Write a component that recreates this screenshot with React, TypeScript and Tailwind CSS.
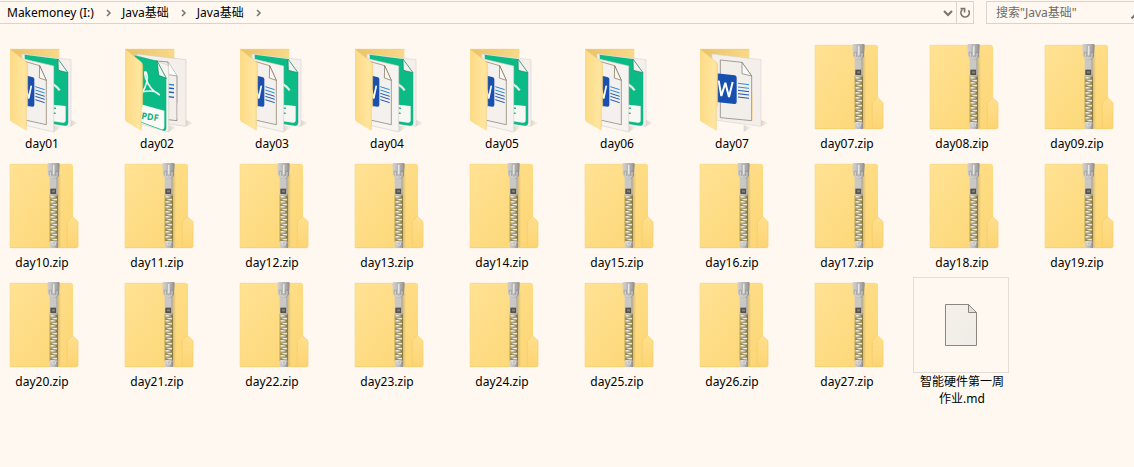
import type { ReactNode } from "react";

type Kind = "word-pdf" | "pdf-word" | "word" | "zip" | "file";
type Entry = { name: string; kind: Kind };

const folders: Entry[] = [
  { name: "day01", kind: "word-pdf" },
  { name: "day02", kind: "pdf-word" },
  { name: "day03", kind: "word-pdf" },
  { name: "day04", kind: "word-pdf" },
  { name: "day05", kind: "word-pdf" },
  { name: "day06", kind: "word-pdf" },
  { name: "day07", kind: "word" },
];

const archives: Entry[] = Array.from({ length: 21 }, (_, i) => ({
  name: `day${String(i + 7).padStart(2, "0")}.zip`,
  kind: "zip",
}));

const entries: Entry[] = [...folders, ...archives, { name: "智能硬件第一周作业.md", kind: "file" }];

function SharedPaint() {
  return (
    <svg className="absolute size-0" aria-hidden="true">
      <defs>
        <linearGradient id="folder" x1="0" y1="0" x2="1" y2="1">
          <stop offset="0" stopColor="#ffe294" />
          <stop offset="1" stopColor="#fdd674" />
        </linearGradient>
        <linearGradient id="back" x1="0" y1="0" x2="1" y2="0">
          <stop offset="0" stopColor="#e9c267" />
          <stop offset="1" stopColor="#f9d988" />
        </linearGradient>
        <linearGradient id="flap" x1="0" y1="0" x2="1" y2="0">
          <stop offset="0" stopColor="#fddb85" />
          <stop offset="0.8" stopColor="#ffe59f" />
          <stop offset="1" stopColor="#fbdc8c" />
        </linearGradient>
        <linearGradient id="tab" x1="0" y1="0" x2="0" y2="1">
          <stop offset="0" stopColor="#ffdf8c" />
          <stop offset="1" stopColor="#fdd473" />
        </linearGradient>
        <linearGradient id="metal" x1="0" y1="0" x2="1" y2="0">
          <stop offset="0" stopColor="#d2d1cf" />
          <stop offset="0.6" stopColor="#b9b8b6" />
          <stop offset="1" stopColor="#8c8a88" />
        </linearGradient>
        <linearGradient id="shade" x1="0" y1="0" x2="1" y2="0">
          <stop offset="0" stopColor="#8d8372" stopOpacity="0.35" />
          <stop offset="1" stopColor="#8d8372" stopOpacity="0" />
        </linearGradient>
        <linearGradient id="floor" x1="0" y1="0" x2="1" y2="0">
          <stop offset="0" stopColor="#8d8372" stopOpacity="0.3" />
          <stop offset="1" stopColor="#8d8372" stopOpacity="0" />
        </linearGradient>
        <linearGradient id="paper" x1="0" y1="0" x2="1" y2="1">
          <stop offset="0" stopColor="#f5f1ea" />
          <stop offset="1" stopColor="#efebe6" />
        </linearGradient>
        <pattern id="teeth" x="149" y="126" width="25" height="15" patternUnits="userSpaceOnUse">
          <rect width="25" height="15" fill="#8c7c3c" />
          <rect x="0" width="3" height="15" fill="#b99f4d" />
          <path d="M3 0h10v5H3zM11 8h11v5H11z" fill="#eeebe2" />
          <path d="M3 5h8v3H3zM13 13h9v2h-9z" fill="#b5b1a3" />
          <path d="M13 1h5v4h-5zM6 9h5v4H6z" fill="#c8c3b4" />
        </pattern>
      </defs>
    </svg>
  );
}

function FolderShell({ children }: { children: ReactNode }) {
  return (
    <svg viewBox="-21 -3 288 288" className="size-full" aria-hidden="true">
      <path d="M213 240L236 249L213 259Z" fill="url(#floor)" />
      <path d="M161 256L186 262L161 276Z" fill="url(#floor)" />
      <path d="M30 27H178V235H30Z" fill="url(#back)" />
      {children}
      <path d="M30 27L76 64Q83 69 83 76V197L79 205V272L34 245Q30 243 30 238Z" fill="url(#flap)" />
      <path d="M30 27L76 64Q83 69 83 76V197L79 205V270" fill="none" stroke="#efca70" strokeWidth="1.5" />
      <path d="M30 28H178" stroke="#f3cf7a" strokeWidth="2" />
    </svg>
  );
}

function WordPdfFolder() {
  return (
    <FolderShell>
      <path d="M66 42L213 59V259L162 252L66 235Z" fill="#f4efeb" stroke="#ddd7d2" strokeWidth="2" />
      <path d="M74 44L174 57L204 98V249Q204 258 195 257L80 240Z" fill="#0bba84" />
      <path d="M205 98V250" stroke="#6b8fc0" strokeWidth="1" />
      <path d="M174 57L204 98L175 91Z" fill="#f3f1ef" stroke="#13875f" strokeWidth="2" />
      <path d="M158 132Q170 139 179 151" fill="none" stroke="#dcefe7" strokeWidth="7" />
      <path d="M159 194L197 198V240Q197 249 188 248L159 244Z" fill="#f9f7f3" />
      <path d="M160 204L168 205M160 219L167 220" stroke="#15ae7b" strokeWidth="4" fill="none" />
      <path d="M62 55L161 78V276L80 257Z" fill="#f7f3f0" stroke="#d8d2cc" strokeWidth="2" />
      <path d="M70 63L119 77L139 121V254L80 241" fill="#f4f0ed" stroke="#827358" strokeWidth="2" />
      <path d="M119 77L118 114L139 121Z" fill="#f9f7f4" stroke="#75684f" strokeWidth="2" />
      <path d="M75 106L99 112Q103 113 103 118V195Q103 200 98 200L75 197Z" fill="#194fae" />
      <path d="M80 150L86 176L94 137" fill="none" stroke="#fff" strokeWidth="5" />
      <path d="M106 140L134 149M106 150L134 159" stroke="#2388d8" strokeWidth="3" />
      <path d="M106 160L134 169M106 169L134 178M106 179L134 188" stroke="#1d58b5" strokeWidth="3" />
    </FolderShell>
  );
}

function PdfWordFolder() {
  return (
    <FolderShell>
      <path d="M66 42L213 59V259L162 252L66 235Z" fill="#f4efeb" stroke="#d3ccc6" strokeWidth="2" />
      <path d="M90 60L159 66L186 108V242L150 238Z" fill="#f2eeea" stroke="#716b63" strokeWidth="2" />
      <path d="M159 66L161 104L186 108" fill="#fff" stroke="#8b8479" strokeWidth="2" />
      <path d="M188 190V236" stroke="#f9dcaf" strokeWidth="3" />
      <path d="M159 133L177 135" stroke="#2685d5" strokeWidth="4" />
      <path d="M159 144L177 146M159 156L177 158M159 170L177 172" stroke="#1c56b4" strokeWidth="4" />
      <path d="M58 44L156 74L161 80V276L66 249Z" fill="#f7f4ef" stroke="#d7d0c8" strokeWidth="2" />
      <path d="M58 46L126 62L154 115V263Q154 274 145 272L76 247Z" fill="#0bba84" />
      <path d="M126 62L131 106L154 115Z" fill="#e7f6ef" stroke="#127e5a" strokeWidth="2" />
      <path d="M80 161Q104 122 94 98Q86 89 92 115Q104 150 133 164Q119 147 80 156" fill="none" stroke="#edfaf2" strokeWidth="5" strokeLinecap="round" strokeLinejoin="round" />
      <path d="M78 193L148 212V259Q148 270 139 268L78 245Z" fill="#fbfaf6" />
      <text x="78" y="236" transform="rotate(9 78 236)" fill="#0eae7c" fontFamily="Open Sans, sans-serif" fontSize="27" fontWeight="700">PDF</text>
    </FolderShell>
  );
}

function WordFolder() {
  return (
    <FolderShell>
      <path d="M66 42L213 59V259L160 252L66 239Z" fill="#f4efeb" stroke="#ddd6d0" strokeWidth="2" />
      <path d="M91 60L156 67L185 108V242L91 233Z" fill="#f2eeea" stroke="#77736b" strokeWidth="2" />
      <path d="M156 67V101L185 108Z" fill="#fbf9f6" stroke="#77736b" strokeWidth="2" />
      <path d="M188 162V237" stroke="#f9dcaf" strokeWidth="3" />
      <path d="M78 100L134 106Q140 107 140 113V186Q140 193 133 192L78 186Z" fill="#174fae" />
      <path d="M86 122L94 168L106 128L117 171L128 126" fill="none" stroke="#fff" strokeWidth="6" strokeLinejoin="bevel" />
      <path d="M144 130L177 134M144 141L177 145" stroke="#2a91dc" strokeWidth="3" />
      <path d="M144 151L177 155M144 161L177 165M144 171L177 175" stroke="#1a55b1" strokeWidth="3" />
    </FolderShell>
  );
}

function ZipFolder() {
  return (
    <svg viewBox="-21 12 288 288" className="size-full" aria-hidden="true">
      <path d="M30 30H213Q219 30 219 37V282H30Z" fill="url(#folder)" />
      <path d="M30 281V31H213" fill="none" stroke="#f9d98a" strokeWidth="2" />
      <path d="M202 282V203L217 187L234 203V277Q234 282 229 282Z" fill="url(#tab)" />
      <path d="M202 280V203L217 187L234 203V277Q234 281 229 281H30" fill="none" stroke="#f3cd6d" strokeWidth="2" />
      <rect x="174" y="60" width="9" height="220" fill="url(#shade)" />
      <rect x="149" y="121" width="25" height="143" fill="url(#teeth)" />
      <path d="M146 27H176Q180 27 179 33L177 65L173 70V125H149V70L144 64L142 32Q142 27 146 27Z" fill="url(#metal)" />
      <path d="M146 50H156V66H150L146 61ZM166 50H176V62L172 67H166Z" fill="#858482" opacity="0.4" />
      <path d="M157 31H165V58Q165 63 161 63Q157 63 157 58Z" fill="#e5e5e4" stroke="#a3a2a0" strokeWidth="2" />
      <path d="M151 54V64Q151 70 161 70Q171 70 171 64V54" fill="none" stroke="#d8d8d6" strokeWidth="3" />
      <path d="M150 74H169V104H150Z" fill="#c9c8c6" />
      <path d="M151 104H168V120H151Z" fill="#535149" />
      <path d="M156 109H165V115H156Z" fill="#888268" />
      <path d="M149 263H174V282H149Z" fill="url(#metal)" />
      <path d="M150 264H172M157 265V273H166V265" stroke="#dedddb" strokeWidth="3" fill="none" />
    </svg>
  );
}

function BlankFile() {
  return (
    <span className="flex size-full items-center justify-center border border-[#e4dcd6]">
      <svg viewBox="0 0 32 42" className="h-[42px] w-8" aria-hidden="true">
        <path d="M.5.5H23.5L31.5 8.5V41.5H.5Z" fill="url(#paper)" stroke="#8a8782" />
        <path d="M23.5.5V8.5H31.5Z" fill="#e4e0db" stroke="#8a8782" />
      </svg>
    </span>
  );
}

const artwork: Record<Kind, () => ReactNode> = {
  "word-pdf": WordPdfFolder,
  "pdf-word": PdfWordFolder,
  word: WordFolder,
  zip: ZipFolder,
  file: BlankFile,
};

function FileTile({ entry }: { entry: Entry }) {
  const Art = artwork[entry.kind];
  return (
    <button type="button" className="flex w-24 flex-col items-center">
      <span className="block size-24">
        <Art />
      </span>
      <span className="pr-1 pl-1.5 text-center text-[12px] leading-[17px] break-words text-black">{entry.name}</span>
    </button>
  );
}

function Crumb({ label }: { label: string }) {
  return (
    <li className="flex items-center">
      <a href="#" className="whitespace-nowrap">{label}</a>
      <svg viewBox="0 0 27 8" className="h-2 w-[27px]" aria-hidden="true">
        <path d="M13 1L16 4L13 7" fill="none" stroke="#77736f" strokeWidth="1.5" />
      </svg>
    </li>
  );
}

export default function App() {
  return (
    <div className="min-h-screen overflow-hidden bg-[#fff8f0] font-['Noto_Sans','Noto_Sans_CJK_SC',sans-serif] text-black">
      <SharedPaint />
      <header className="flex gap-3 pt-px text-[12px]">
        <div className="flex h-[23px] min-w-0 flex-1 border-y border-r border-[#d9d4ce]">
          <nav aria-label="Path" className="min-w-0 flex-1">
            <ol className="flex h-full items-center gap-px pl-[7px]">
              <Crumb label="Makemoney (I:)" />
              <Crumb label="Java基础" />
              <Crumb label="Java基础" />
            </ol>
          </nav>
          <button type="button" aria-label="Previous locations" className="flex w-4 items-center justify-center">
            <svg viewBox="0 0 10 8" className="h-2 w-2.5" aria-hidden="true">
              <path d="M1 2L5 6L9 2" fill="none" stroke="#77736f" strokeWidth="2" />
            </svg>
          </button>
          <button type="button" aria-label="Refresh" className="flex w-[17px] items-center justify-center border-l border-[#d9d4ce]">
            <svg viewBox="0 0 12 12" className="size-3" aria-hidden="true">
              <path d="M3.4 2.6A4.2 4.2 0 1 0 9.4 3.2" fill="none" stroke="#77736f" strokeWidth="1.7" />
              <path d="M1.5 1.6H5.6V5.6" fill="none" stroke="#77736f" strokeWidth="1.6" />
            </svg>
          </button>
        </div>
        <form role="search" className="flex h-[23px] w-[148px] items-center overflow-hidden border-y border-l border-[#d9d4ce]">
          <input
            type="search"
            aria-label="搜索"
            placeholder={'搜索"Java基础"'}
            className="h-full w-36 shrink-0 bg-transparent pl-[9px] outline-none placeholder:text-[#6f6b67]"
          />
          <svg viewBox="0 0 12 12" className="size-3 shrink-0" aria-hidden="true">
            <circle cx="7.5" cy="4.5" r="3.5" fill="none" stroke="#77736f" strokeWidth="1.5" />
            <path d="M5 7L.5 11.5" stroke="#77736f" strokeWidth="2" />
          </svg>
        </form>
      </header>
      <main className="-ml-[7px] grid grid-cols-[repeat(auto-fill,96px)] items-start gap-x-[19px] gap-y-1.5 pt-[15px]">
        {entries.map((entry) => (
          <FileTile key={entry.name} entry={entry} />
        ))}
      </main>
    </div>
  );
}
